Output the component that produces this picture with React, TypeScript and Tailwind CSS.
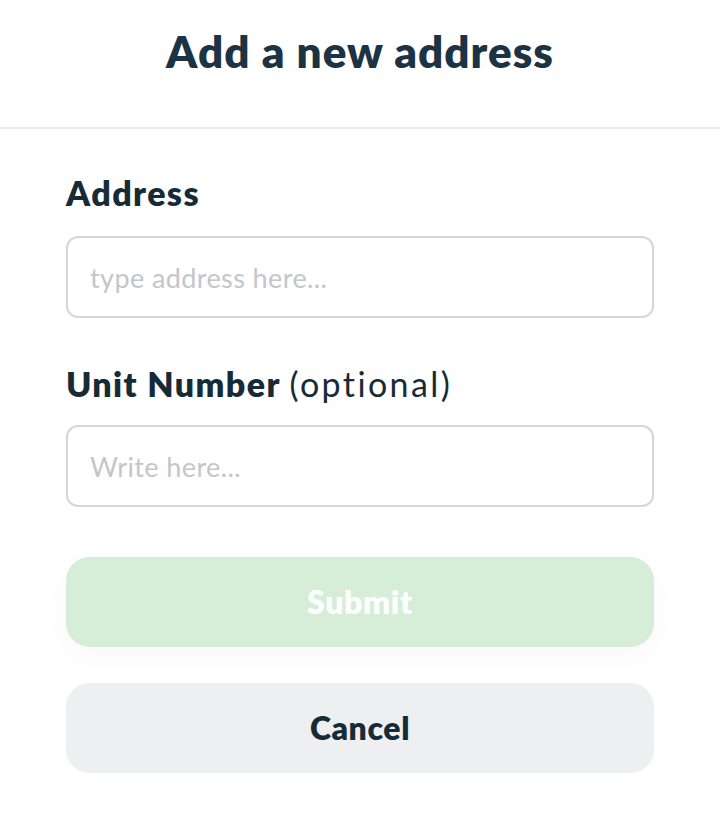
export default function App() {
  return (
    <div className="min-h-[826px] w-full bg-white font-['Lato',sans-serif] text-[#172b37]">
      {/* Header */}
      <div className="flex h-[129px] items-start justify-center border-b-2 border-[#ececec] pt-[27px]">
        <h1 className="text-[44px] font-extrabold leading-[48px] tracking-[1px] text-[#1c3344]">
          Add a new address
        </h1>
      </div>

      {/* Form */}
      <div className="flex flex-col px-[66px]">
        <label className="mt-[46px] text-[34px] font-extrabold leading-[36px] tracking-[1.4px]">
          Address
        </label>
        <input
          className="mt-[25px] h-[82px] w-full rounded-[12px] border-2 border-[#d6d6d6] px-[22px] text-[27px] tracking-[0.4px] outline-none placeholder:text-[#c3c6ca]"
          placeholder="type address here..."
        />

        <label className="mt-[48px] text-[34px] font-extrabold leading-[36px] tracking-[1.4px]">
          Unit Number <span className="font-normal tracking-[2.4px]">(optional)</span>
        </label>
        <input
          className="mt-[23px] h-[82px] w-full rounded-[12px] border-2 border-[#d6d6d6] px-[22px] text-[27px] tracking-[0.4px] outline-none placeholder:text-[#c3c6ca]"
          placeholder="Write here..."
        />

        <button className="mt-[50px] h-[90px] w-full rounded-[24px] bg-[#d6eed8] text-[32px] font-extrabold tracking-[0.6px] text-white shadow-[0_10px_30px_rgba(0,0,0,0.03)]">
          Submit
        </button>
        <button className="mt-[36px] h-[90px] w-full rounded-[24px] bg-[#eeeff1] text-[32px] font-extrabold tracking-[0.6px] text-[#172b37]">
          Cancel
        </button>
      </div>
    </div>
  );
}
